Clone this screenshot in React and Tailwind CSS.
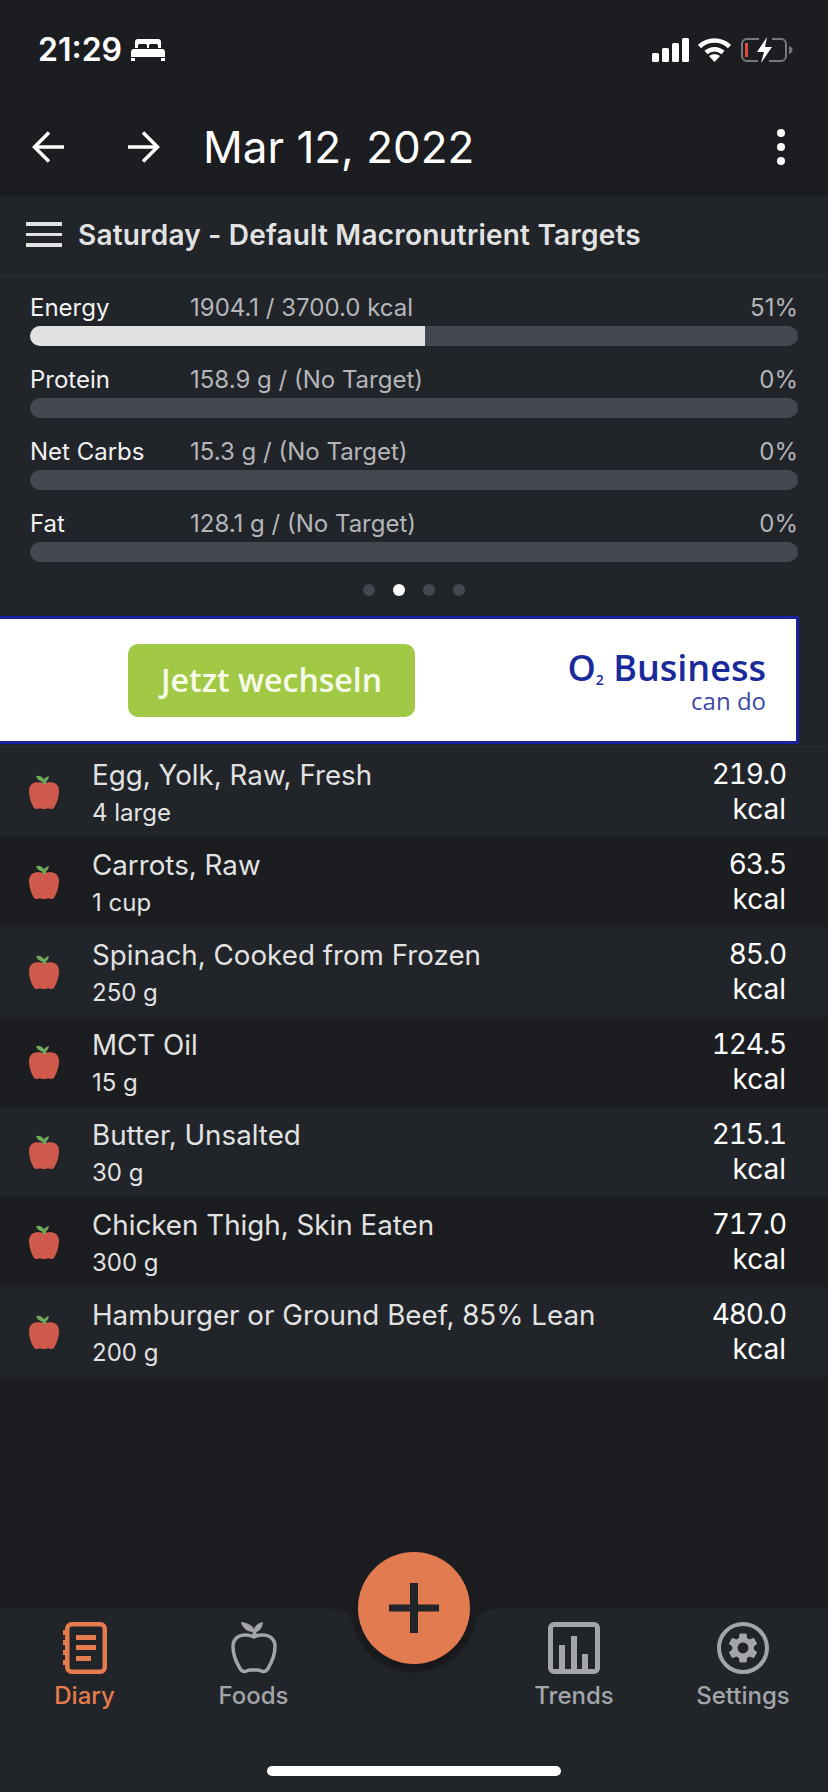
import { MdSettings } from 'react-icons/md';

const macros = [
  { label: 'Energy', value: '1904.1 / 3700.0 kcal', pct: '51%', fill: true },
  { label: 'Protein', value: '158.9 g / (No Target)', pct: '0%' },
  { label: 'Net Carbs', value: '15.3 g / (No Target)', pct: '0%' },
  { label: 'Fat', value: '128.1 g / (No Target)', pct: '0%' },
];

const foods = [
  { name: 'Egg, Yolk, Raw, Fresh', amount: '4 large', kcal: '219.0' },
  { name: 'Carrots, Raw', amount: '1 cup', kcal: '63.5' },
  { name: 'Spinach, Cooked from Frozen', amount: '250 g', kcal: '85.0' },
  { name: 'MCT Oil', amount: '15 g', kcal: '124.5' },
  { name: 'Butter, Unsalted', amount: '30 g', kcal: '215.1' },
  { name: 'Chicken Thigh, Skin Eaten', amount: '300 g', kcal: '717.0' },
  { name: 'Hamburger or Ground Beef, 85% Lean', amount: '200 g', kcal: '480.0' },
];

const Bed = () => (
  <svg width="34" height="22" viewBox="0 0 34 22" fill="#fff">
    <path d="M4 9V3a3 3 0 0 1 3-3h20a3 3 0 0 1 3 3v6h-3V6.500a1.500 1.500 0 0 0-1.500-1.500h-6a1.500 1.500 0 0 0-1.500 1.500V9h-2V6.500A1.500 1.500 0 0 0 14.500 5h-6A1.500 1.500 0 0 0 7 6.500V9z" />
    <path d="M3 10h28a3 3 0 0 1 3 3v5H0v-5a3 3 0 0 1 3-3zM0 19h4v3H0zM30 19h4v3h-4z" />
  </svg>
);

const StatusIcons = () => (
  <div className="flex items-center">
    <svg width="37" height="24" viewBox="0 0 37 24" fill="#fff">
      <rect x="0" y="15" width="7" height="9" rx="1.500" />
      <rect x="10" y="10" width="7" height="14" rx="1.500" />
      <rect x="20" y="5" width="7" height="19" rx="1.500" />
      <rect x="30" y="0" width="7" height="24" rx="1.500" />
    </svg>
    <svg className="ml-[9px]" width="33" height="24" viewBox="0 0 33 24" fill="none" stroke="#fff" strokeWidth="4.500">
      <path d="M1.500 8.500C10 .5 23 .5 31.500 8.500" />
      <path d="M8 14.500c5-4.500 12-4.500 17 0" />
      <path d="M16.500 24l-5.500-6c3.200-2.400 7.800-2.400 11 0z" fill="#fff" stroke="none" />
    </svg>
    <svg className="ml-[9px]" width="54" height="28" viewBox="0 0 54 28" fill="none">
      <path d="M19 3H7a5 5 0 0 0-5 5v12a5 5 0 0 0 5 5h11M32 3h9a5 5 0 0 1 5 5v12a5 5 0 0 1-5 5H29" stroke="#77797c" strokeWidth="2" />
      <rect x="5" y="7" width="3" height="14" fill="#e5483a" />
      <path d="M27 1L17 16h7l-3 11 11-16h-7z" fill="#fff" />
      <path d="M49 10c2 .5 3.500 2 3.500 4s-1.500 3.500-3.500 4z" fill="#77797c" />
    </svg>
  </div>
);

const ArrowLeft = () => (
  <svg width="32" height="32" viewBox="0 0 32 32" fill="none" stroke="#fff" strokeWidth="3.500">
    <path d="M32 16H3M17 1.500L2.500 16 17 30.500" />
  </svg>
);

const ArrowRight = () => (
  <svg width="32" height="32" viewBox="0 0 32 32" fill="none" stroke="#fff" strokeWidth="3.500">
    <path d="M0 16h29M15 1.500L29.500 16 15 30.500" />
  </svg>
);

const AppleIcon = () => (
  <svg width="30" height="34" viewBox="0 0 30 34">
    <path d="M15 8.500C18 7 23 6.500 26.500 8.500 29 10 30 13 30 16c0 5-2 12-4.500 16-.6 1-1.500 2-3 2-1.300 0-1.800-.8-3-.8-1.500 0-2.800.8-4.500.8s-3-.8-4.500-.8c-1.200 0-1.700.8-3 .8-1.500 0-2.400-1-3-2C2 28 0 21 0 16c0-3 1-6 3.500-7.500C7 6.500 12 7 15 8.500z" fill="#cf5a4c" />
    <path d="M13.500 9V6.500C11 6.500 8 4 7 1.500 10-.5 14 2 15 4.500c.8-1.600 3-3.200 5-3.500-.2 2.500-2 5-3 5.500V9z" fill="#6fa85a" />
  </svg>
);

const DiaryIcon = () => (
  <svg width="44" height="52" viewBox="0 0 44 52" fill="none">
    <rect x="4.250" y="2.250" width="37.500" height="47.500" rx="4.500" stroke="#e57c4d" strokeWidth="4.500" />
    <path d="M13 13h20v5H13zM13 23h20v5H13zM13 34h15v5H13z" fill="#e57c4d" />
    <path d="M0 8h3v5H0zM0 18h3v5H0zM0 28h3v5H0zM0 38h3v5H0z" fill="#e57c4d" />
  </svg>
);

const FoodsIcon = () => (
  <svg width="46" height="52" viewBox="0 0 46 52" fill="none">
    <path d="M23 15c4-2 11-3 15.500-.5 3.500 2 5.500 5 5.500 10 0 8-4 17-7 22-1 1.800-2.500 3-4.500 3s-3.500-1.500-5.500-1.500h-8c-2 0-3.500 1.500-5.500 1.500s-3.500-1.200-4.500-3c-3-5-7-14-7-22 0-5 2-8 5.500-10C12 12 19 13 23 15z" stroke="#a3a5a8" strokeWidth="3.500" />
    <path d="M21.500 14V10C17 10 11 6 10 0c6 .5 11 3 13 7 1-3 4-6 9-7-.5 5-3 9-6.500 10v4z" fill="#a3a5a8" />
  </svg>
);

const TrendsIcon = () => (
  <svg width="52" height="52" viewBox="0 0 52 52" fill="none">
    <rect x="2.500" y="2.500" width="47" height="47" rx="3.500" stroke="#a3a5a8" strokeWidth="5" />
    <path d="M11 23h6v27h-6zM23 14h6v36h-6zM34 32h6v18h-6z" fill="#a3a5a8" />
  </svg>
);

const SettingsIcon = () => (
  <div className="w-[52px] h-[52px] rounded-full border-[4.500px] border-[#a3a5a8] flex items-center justify-center">
    <MdSettings className="text-[#a3a5a8]" size={36} />
  </div>
);

const TabItem = ({ icon, label, active }) => (
  <div className="flex flex-col items-center">
    <div className="h-[52px] flex items-center justify-center">{icon}</div>
    <span className={`mt-[9px] text-[24px] leading-[26px] font-medium ${active ? 'text-[#e57c4d]' : 'text-[#a3a5a8]'}`}>
      {label}
    </span>
  </div>
);

export default function App() {
  return (
    <div className="relative w-[828px] h-[1792px] flex flex-col overflow-hidden bg-[#1c1d21] font-['Inter',sans-serif]">
      {/* status bar */}
      <div className="h-[100px] flex items-center justify-between pl-[38px] pr-[34px]">
        <div className="flex items-center gap-[9px]">
          <span className="text-[32px] leading-none font-semibold text-white">21:29</span>
          <Bed />
        </div>
        <StatusIcons />
      </div>

      {/* date header */}
      <div className="h-[96px] flex items-center pl-[32px] pr-[43px] pb-[2px]">
        <ArrowLeft />
        <div className="ml-[64px]"><ArrowRight /></div>
        <span className="ml-[43px] text-[44px] leading-none text-white">Mar 12, 2022</span>
        <div className="ml-auto flex flex-col gap-[6px]">
          <div className="w-2 h-2 rounded-full bg-white" />
          <div className="w-2 h-2 rounded-full bg-white" />
          <div className="w-2 h-2 rounded-full bg-white" />
        </div>
      </div>

      {/* targets title */}
      <div className="h-[80px] flex items-center pl-[26px] pb-[2px] bg-[#212429] border-b border-[#2a2d32]">
        <div className="w-9 flex flex-col gap-[7px]">
          <div className="h-[3.500px] bg-[#e2e2e2]" />
          <div className="h-[3.500px] bg-[#e2e2e2]" />
          <div className="h-[3.500px] bg-[#e2e2e2]" />
        </div>
        <span className="ml-[16px] text-[28px] leading-none font-semibold tracking-[0.2px] text-[#e2e2e2]">
          Saturday - Default Macronutrient Targets
        </span>
      </div>

      {/* macros */}
      <div className="h-[340px] bg-[#212429] px-[30px] pt-[14px]">
        {macros.map((m) => (
          <div key={m.label} className="mb-4">
            <div className="h-9 flex items-center text-[24px] leading-none">
              <span className="w-[160px] text-[#f2f2f2]">{m.label}</span>
              <span className="flex-1 text-[#b4b6b9]">{m.value}</span>
              <span className="text-[#b4b6b9]">{m.pct}</span>
            </div>
            <div className="h-5 w-[768px] rounded-full bg-[#44474f] overflow-hidden">
              {m.fill && <div className="h-full w-[395px] bg-[#e2e2e2]" />}
            </div>
          </div>
        ))}
        <div className="flex justify-center gap-[18px] pt-[6px]">
          <div className="w-3 h-3 rounded-full bg-[#44474f]" />
          <div className="w-3 h-3 rounded-full bg-white" />
          <div className="w-3 h-3 rounded-full bg-[#44474f]" />
          <div className="w-3 h-3 rounded-full bg-[#44474f]" />
        </div>
      </div>

      {/* ad banner */}
      <div className="bg-[#212429] h-[130px]">
        <div className="w-[799px] h-[128px] bg-white border-y-[3px] border-r-[3px] border-[#1a22a0] flex items-center pl-[128px] pr-[30px]">
          <div className="w-[287px] h-[73px] rounded-[10px] bg-[#a2c945] flex items-center justify-center font-['Open_Sans',sans-serif] text-[32px] font-semibold text-[#f7fbe9]">
            Jetzt wechseln
          </div>
          <div className="ml-auto flex flex-col items-end font-['Open_Sans',sans-serif]">
            <span className="text-[36px] leading-[42px] font-semibold text-[#1a2a9c]">
              O<sub className="text-[14px] font-semibold">2</sub> Business
            </span>
            <span className="text-[24px] leading-[24px] text-[#3d4aa6]">can do</span>
          </div>
        </div>
      </div>

      {/* diary rows */}
      <div className="flex-1 border-t border-[#2a2d32]">
        {foods.map((f, i) => (
          <div
            key={f.name}
            className={`h-[90px] flex items-center pl-[29px] pr-[42px] ${i % 2 === 0 ? 'bg-[#212429]' : 'bg-[#1c1d21]'}`}
          >
            <AppleIcon />
            <div className="ml-[33px] pt-[2px] flex-1 flex flex-col gap-[10px]">
              <span className="text-[27.750px] leading-[30px] text-[#e2e2e2]">{f.name}</span>
              <span className="text-[24px] leading-[26px] text-[#e2e2e2]">{f.amount}</span>
            </div>
            <div className="flex flex-col items-end text-[28px] leading-[35px] text-white">
              <span className="tabular-nums tracking-[-1.200px]">{f.kcal}</span>
              <span>kcal</span>
            </div>
          </div>
        ))}
      </div>

      {/* tab bar */}
      <div className="relative h-[184px] bg-[#212429] pt-[14px]">
        <svg className="absolute left-[300px] top-0" width="228" height="72" viewBox="0 0 228 72">
          <path d="M17 0Q50 0 52 12A63 63 0 0 0 176 12Q178 0 211 0Z" fill="#1c1d21" />
        </svg>
        <div className="absolute left-[358px] top-[-56px] w-[112px] h-[112px] rounded-full bg-[#e27b50] flex items-center justify-center shadow-[0_6px_12px_rgba(0,0,0,0.2)]">
          <svg width="50" height="50" viewBox="0 0 50 50" fill="#212429">
            <path d="M21 0h8v50h-8zM0 21.500h50v7H0z" />
          </svg>
        </div>
        <div className="grid grid-cols-[169px_169px_152px_168px_170px]">
          <TabItem icon={<DiaryIcon />} label="Diary" active />
          <TabItem icon={<FoodsIcon />} label="Foods" />
          <div />
          <TabItem icon={<TrendsIcon />} label="Trends" />
          <TabItem icon={<SettingsIcon />} label="Settings" />
        </div>
        <div className="absolute left-[267px] bottom-[16px] w-[294px] h-[10px] rounded-full bg-white" />
      </div>
    </div>
  );
}
